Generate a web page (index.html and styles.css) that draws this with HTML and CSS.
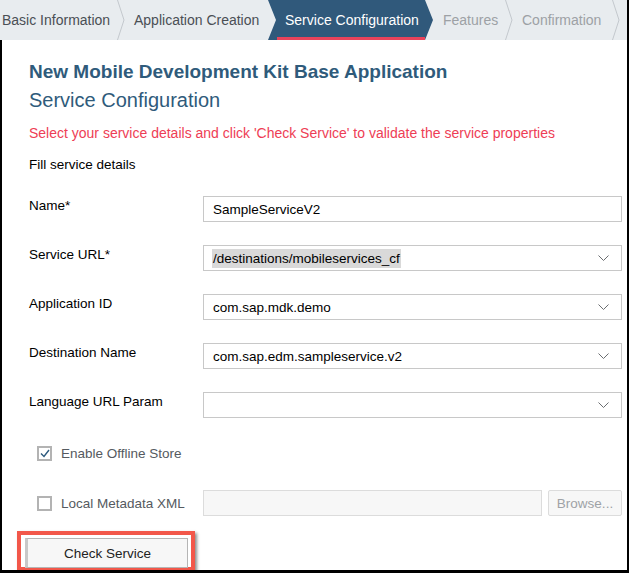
FILE: index.html
```html
<!DOCTYPE html>
<html>
<head>
<meta charset="utf-8">
<link rel="stylesheet" href="styles.css">
</head>
<body>
<div class="frame">
  <nav class="steps">
    <div class="step done s1">Basic Information</div>
    <svg class="sep" width="8" height="40" viewBox="0 0 8 40"><polyline points="0.5,0 7,20 0.5,40" fill="none" stroke="#c3c8cd" stroke-width="1"/></svg>
    <div class="step done s2">Application Creation</div>
    <div class="step active">Service Configuration</div>
    <div class="step todo s4">Features</div>
    <svg class="sep" width="8" height="40" viewBox="0 0 8 40"><polyline points="0.5,0 7,20 0.5,40" fill="none" stroke="#c3c8cd" stroke-width="1"/></svg>
    <div class="step todo s5">Confirmation</div>
    <svg class="sep" width="8" height="40" viewBox="0 0 8 40"><polyline points="0.5,0 7,20 0.5,40" fill="none" stroke="#c3c8cd" stroke-width="1"/></svg>
  </nav>
  <main class="content">
    <h1 class="title">New Mobile Development Kit Base Application</h1>
    <h2 class="subtitle">Service Configuration</h2>
    <p class="hint">Select your service details and click 'Check Service' to validate the service properties</p>
    <p class="fill">Fill service details</p>
    <div class="form">
      <div class="row">
        <label class="lbl">Name*</label>
        <div class="field"><span class="val">SampleServiceV2</span></div>
      </div>
      <div class="row">
        <label class="lbl">Service URL*</label>
        <div class="field select"><span class="val sel">/destinations/mobileservices_cf</span><svg class="dd" width="11" height="7" viewBox="0 0 11 7"><polyline points="0.5,0.5 5.5,5.5 10.5,0.5" fill="none" stroke="#6a6d70" stroke-width="1"/></svg></div>
      </div>
      <div class="row">
        <label class="lbl">Application ID</label>
        <div class="field select"><span class="val">com.sap.mdk.demo</span><svg class="dd" width="11" height="7" viewBox="0 0 11 7"><polyline points="0.5,0.5 5.5,5.5 10.5,0.5" fill="none" stroke="#6a6d70" stroke-width="1"/></svg></div>
      </div>
      <div class="row">
        <label class="lbl">Destination Name</label>
        <div class="field select"><span class="val">com.sap.edm.sampleservice.v2</span><svg class="dd" width="11" height="7" viewBox="0 0 11 7"><polyline points="0.5,0.5 5.5,5.5 10.5,0.5" fill="none" stroke="#6a6d70" stroke-width="1"/></svg></div>
      </div>
      <div class="row">
        <label class="lbl">Language URL Param</label>
        <div class="field select"><span class="val"></span><svg class="dd" width="11" height="7" viewBox="0 0 11 7"><polyline points="0.5,0.5 5.5,5.5 10.5,0.5" fill="none" stroke="#6a6d70" stroke-width="1"/></svg></div>
      </div>
    </div>
    <div class="check-row first">
      <span class="box checked"><svg width="10" height="9" viewBox="0 0 10 9"><polyline points="1,4.5 4,7.5 9,1" fill="none" stroke="#2c5a7e" stroke-width="1.4"/></svg></span>
      <span class="ctext">Enable Offline Store</span>
    </div>
    <div class="check-row second">
      <span class="box"></span>
      <span class="ctext wide">Local Metadata XML</span>
      <div class="file"></div>
      <div class="browse">Browse...</div>
    </div>
    <div class="action">
      <div class="highlight"><div class="btn">Check Service</div></div>
    </div>
  </main>
</div>
</body>
</html>
```
FILE: styles.css
```css
* { box-sizing: border-box; }
html, body { margin: 0; padding: 0; background: #fff; }
body { font-family: "Liberation Sans", Arial, sans-serif; color: #000; }
.frame {
  width: 629px;
  height: 573px;
  border-right: 2px solid #000;
  border-bottom: 3px solid #000;
  overflow: hidden;
  display: flex;
  flex-direction: column;
}
.steps {
  display: flex;
  height: 40px;
  background: #e8ecef;
  flex: none;
  align-items: stretch;
}
.step {
  display: flex;
  align-items: center;
  font-size: 14px;
  white-space: nowrap;
  flex: none;
}
.sep { flex: none; display: block; }
.done { color: #4a4f55; }
.todo { color: #9da1a5; }
.s1 { width: 117px; padding-left: 2px; }
.s2 { width: 143px; padding-left: 9px; }
.active {
  width: 165px;
  padding-left: 17px;
  color: #fff;
  background: linear-gradient(#e9435b, #e9435b) no-repeat left 9px bottom 0 / calc(100% - 17px) 3px, #30597b;
  clip-path: polygon(0 0, calc(100% - 8px) 0, 100% 50%, calc(100% - 8px) 100%, 0 100%, 8px 50%);
}
.s4 { width: 72px; padding-left: 10px; }
.s5 { width: 99px; padding-left: 9px; }

.content {
  flex: 1;
  border-left: 2px solid #000;
  padding: 0 5px 0 27px;
  display: flex;
  flex-direction: column;
}
.title {
  margin: 20px 0 0;
  font-size: 19px;
  font-weight: bold;
  color: #2f5b7b;
  line-height: 24px;
}
.subtitle {
  margin: 3px 0 0;
  font-size: 20px;
  font-weight: normal;
  color: #2f5b7b;
  line-height: 26px;
}
.hint {
  margin: 10px 0 0;
  font-size: 14px;
  color: #ee3d55;
  line-height: 20px;
}
.fill {
  margin: 12px 0 0;
  font-size: 13.5px;
  line-height: 20px;
}
.form {
  margin-top: 21px;
  display: flex;
  flex-direction: column;
  gap: 23px;
}
.row {
  display: grid;
  grid-template-columns: 174px 1fr;
  align-items: start;
}
.lbl {
  font-size: 13.5px;
  line-height: 20px;
  padding-top: 0;
  margin-top: 0;
}
.field {
  height: 26px;
  border: 1px solid #c8c8c8;
  display: flex;
  align-items: center;
  padding: 0 12px 0 9px;
  font-size: 13.5px;
}
.val { flex: 1; }
.sel { flex: none; background: #d9d9d9; margin-left: -1px; padding: 2px 1px; }
.select { justify-content: space-between; }
.dd { flex: none; margin-left: auto; }

.check-row {
  display: flex;
  align-items: center;
  font-size: 13.5px;
  color: #555a60;
}
.check-row.first { margin-top: 28px; padding-left: 8px; }
.check-row.second { margin-top: 29px; padding-left: 8px; }
.box {
  width: 15px;
  height: 15px;
  border: 2px solid #b3b3b3;
  background: #fff;
  display: inline-flex;
  align-items: center;
  justify-content: center;
  flex: none;
}
.ctext { margin-left: 9px; }
.ctext.wide { width: 142px; flex: none; }
.file {
  width: 339px;
  height: 26px;
  border: 1px solid #dcdcdc;
  background: #f7f7f7;
  flex: none;
}
.browse {
  margin-left: 6px;
  width: 74px;
  height: 26px;
  border: 1px solid #dcdcdc;
  background: #f7f7f7;
  border-radius: 2px;
  color: #9ea2a6;
  font-size: 13.5px;
  display: flex;
  align-items: center;
  justify-content: center;
  flex: none;
}
.action { margin-top: 15px; margin-left: -12px; }
.highlight {
  width: 178px;
  height: 40px;
  border: 4px solid #f2574a;
  box-shadow: 2px 2px 3px rgba(0,0,0,0.45);
  padding: 3px 3px 0 4px;
  background: #fff;
}
.btn {
  height: 30px;
  border: 1px solid #b5b5b5;
  border-left: 3px solid #c8c8c8;
  background: #f7f7f7;
  display: flex;
  align-items: center;
  justify-content: center;
  font-size: 13.5px;
  color: #222;
}
```
